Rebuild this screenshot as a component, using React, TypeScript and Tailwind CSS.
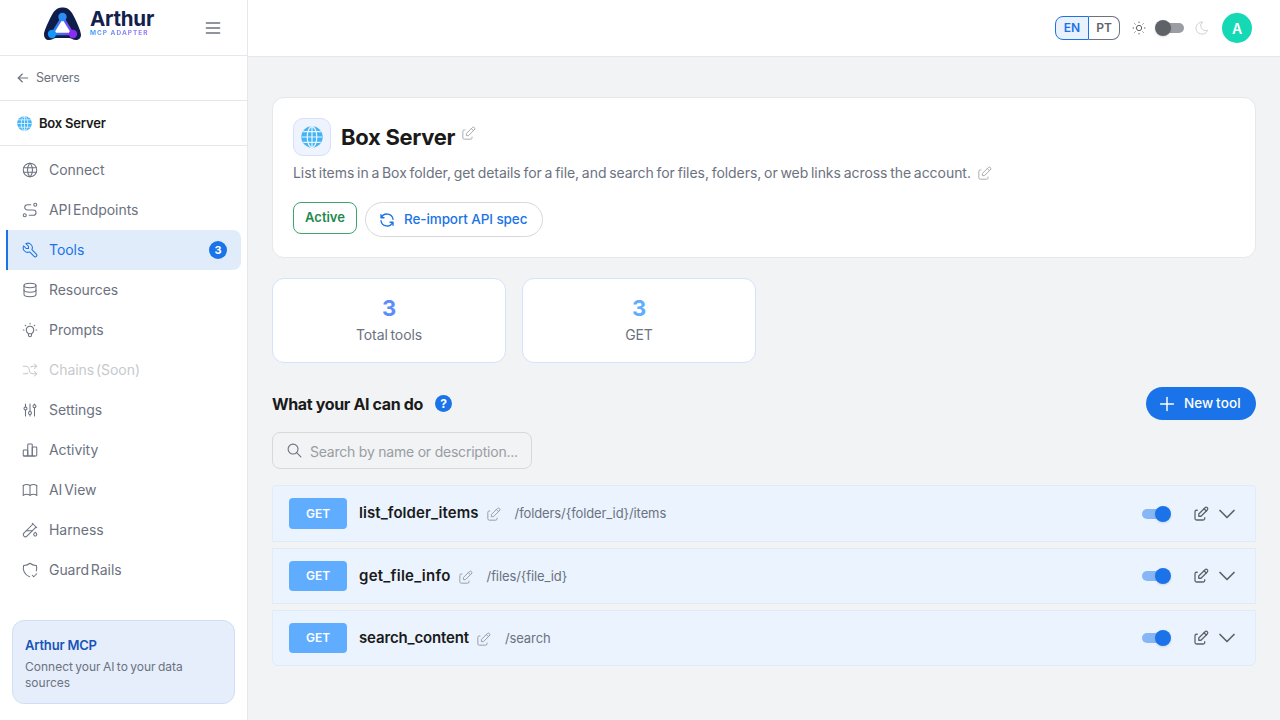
import React from "react";
import {
  TbWorld, TbRoute, TbTool, TbDatabase, TbBulb, TbArrowsShuffle, TbAdjustments, TbChartBar, TbBook,
  TbTestPipe, TbShieldCheck, TbEdit, TbRefresh, TbSearch, TbSun, TbMoon, TbPlus, TbChevronDown, TbMenu2, TbArrowLeft,
} from "react-icons/tb";

const font = { fontFamily: "Inter, 'Noto Sans', sans-serif" };

function Globe({ size }: { size: number }) {
  return (
    <svg width={size} height={size} viewBox="0 0 24 24" fill="none">
      <circle cx="12" cy="12" r="11.7" fill="#45b4f5" />
      <g stroke="#e8f6ff" strokeWidth="1.3" fill="none">
        <ellipse cx="12" cy="12" rx="5.2" ry="11.3" />
        <path d="M12 .5v23M.7 12h22.6M2.4 6.2h19.2M2.4 17.8h19.2" />
      </g>
    </svg>
  );
}

function Logo() {
  return (
    <svg width="40" height="34" viewBox="0 0 40 34" fill="none">
      <defs>
        <linearGradient id="tri" x1="0" y1="0" x2="1" y2="0">
          <stop offset="0" stopColor="#1d8cf8" />
          <stop offset="1" stopColor="#8b3df5" />
        </linearGradient>
      </defs>
      <path d="M1 27C1 24 6 13 10 6 13 1.5 16.5 .5 19.5 .5 23 .5 26 1.5 29 6 33 13 38 24 38 28 38 31 35.5 33 33 33 30 33 28 31 26 31H13C11 31 9 33 6 33 3 33 1 31 1 27Z" fill="#0f1d4a" />
      <path d="M19.5 10L9 27H30L19.5 10Z" stroke="url(#tri)" strokeWidth="2.4" fill="#ffffff" />
      <circle cx="19.5" cy="10" r="4.2" fill="#2a8ef5" />
      <circle cx="9" cy="27" r="4.2" fill="#1596f8" />
      <circle cx="30" cy="27" r="4.2" fill="#8a2df2" />
    </svg>
  );
}

const nav: { label: string; icon: any; active?: boolean; disabled?: boolean }[] = [
  { label: "Connect", icon: TbWorld },
  { label: "API Endpoints", icon: TbRoute },
  { label: "Tools", icon: TbTool, active: true },
  { label: "Resources", icon: TbDatabase },
  { label: "Prompts", icon: TbBulb },
  { label: "Chains (Soon)", icon: TbArrowsShuffle, disabled: true },
  { label: "Settings", icon: TbAdjustments },
  { label: "Activity", icon: TbChartBar },
  { label: "AI View", icon: TbBook },
  { label: "Harness", icon: TbTestPipe },
  { label: "Guard Rails", icon: TbShieldCheck },
];

function Sidebar() {
  return (
    <aside className="w-[248px] h-[720px] shrink-0 bg-white border-r border-[#e5e7eb] flex flex-col">
      <div className="h-[56px] shrink-0 border-b border-[#e5e7eb] flex items-center pl-[43px] pr-[24px]">
        <div className="-mt-[7px]">
          <Logo />
        </div>
        <div className="ml-[7px] flex flex-col items-start -mt-[9px]">
          <span className="text-[20.5px] leading-[20px] font-bold text-[#12204d] tracking-[-0.25px]">Arthur</span>
          <span className="text-[6.5px] leading-[8px] font-bold tracking-[1px] bg-gradient-to-r from-[#3b9cf7] to-[#9b6cf7] bg-clip-text text-transparent">MCP ADAPTER</span>
        </div>
        <TbMenu2 className="ml-auto text-[#6b7280]" size={20} strokeWidth={1.6} />
      </div>
      <div className="h-[45px] shrink-0 border-b border-[#e5e7eb] flex items-center pl-[15px] gap-[5px] text-[#6b7280]">
        <TbArrowLeft size={16} strokeWidth={1.7} />
        <span className="text-[12.5px] tracking-[-0.3px]">Servers</span>
      </div>
      <div className="h-[45px] shrink-0 border-b border-[#e5e7eb] flex items-center pl-[17px] gap-[7px]">
        <Globe size={15} />
        <span className="pt-[1px] text-[13px] font-semibold text-[#1a1a1a] tracking-[-0.2px]">Box Server</span>
      </div>
      <nav className="pt-[4px] flex flex-col">
        {nav.map((n) => {
          const Icon = n.icon;
          return (
            <div
              key={n.label}
              className={
                n.active
                  ? "h-[40px] ml-[6px] mr-[6px] pl-[13px] pr-[14px] flex items-center gap-[10px] rounded-r-[8px] bg-[#e1ecfb] border-l-2 border-[#1a73e8] text-[#1a73e8]"
                  : n.disabled
                  ? "h-[40px] ml-[6px] mr-[6px] pl-[15px] pr-[14px] flex items-center gap-[10px] text-[#c6c9ce]"
                  : "h-[40px] ml-[6px] mr-[6px] pl-[15px] pr-[14px] flex items-center gap-[10px] text-[#6b7280]"
              }
            >
              <Icon size={18} strokeWidth={1.4} className="shrink-0" />
              <span className="pb-[1px] text-[14px] tracking-[-0.05px] [word-spacing:-2px]">{n.label}</span>
              {n.active && (
                <span className="ml-auto w-[18px] h-[18px] rounded-full bg-[#1a73e8] text-white text-[11px] font-bold flex items-center justify-center">3</span>
              )}
            </div>
          );
        })}
      </nav>
      <div className="mt-auto mx-[12px] mb-[16px] h-[84px] rounded-[12px] bg-[#e6eefb] border border-[#cfdff8] px-[12px] pt-[15px]">
        <div className="text-[13px] leading-[18px] font-semibold text-[#1755b8] tracking-[-0.2px]">Arthur MCP</div>
        <div className="mt-[5px] text-[12px] leading-[16px] text-[#6b7280] tracking-[0px] [word-spacing:-1px]">Connect your AI to your data sources</div>
      </div>
    </aside>
  );
}

function Header() {
  return (
    <header className="h-[57px] shrink-0 bg-white border-b border-[#e5e7eb] flex items-center justify-end pr-[28px]">
      <div className="flex h-[24px] text-[12px] font-semibold">
        <span className="w-[34px] flex items-center justify-center rounded-l-[8px] border border-[#1a73e8] bg-[#e9f1fd] text-[#1a73e8]">EN</span>
        <span className="w-[31px] flex items-center justify-center rounded-r-[8px] border border-[#6b7280] border-l-0 text-[#5f6368]">PT</span>
      </div>
      <TbSun size={16} strokeWidth={1.5} className="ml-[11px] text-[#5f6368]" />
      <div className="relative ml-[10px] w-[27px] h-[10px] rounded-full bg-[#9a9da3]">
        <span className="absolute -left-[2px] -top-[3px] w-[16px] h-[16px] rounded-full bg-[#5f6368] shadow-sm" />
      </div>
      <TbMoon size={16} strokeWidth={1.5} className="ml-[10px] text-[#d0d2d6]" />
      <span className="ml-[12px] w-[30px] h-[30px] rounded-full bg-[#15d9b4] text-white text-[14px] font-semibold flex items-center justify-center">A</span>
    </header>
  );
}

function Row({ name, path, first, last, nameClass }: { name: string; path: string; first?: boolean; last?: boolean; nameClass: string }) {
  return (
    <div
      className={
        first
          ? "h-[57px] rounded-t-[4px] bg-[#eaf3fe] border border-[#e0ebfa] flex items-center pl-[16px] pr-[14px]"
          : last
          ? "h-[56px] rounded-b-[6px] bg-[#eaf3fe] border border-[#e0ebfa] flex items-center pl-[16px] pr-[14px]"
          : "h-[56px] bg-[#eaf3fe] border border-[#e0ebfa] flex items-center pl-[16px] pr-[14px]"
      }
    >
      <span className={first ? "w-[58px] h-[31px] rounded-[4px] bg-[#60adff] text-white text-[12px] font-semibold flex items-center justify-center" : "w-[58px] h-[30px] rounded-[4px] bg-[#60adff] text-white text-[12px] font-semibold flex items-center justify-center"}>GET</span>
      <span className={nameClass}>{name}</span>
      <TbEdit size={17} strokeWidth={1.4} className="ml-[6px] mt-[2px] text-[#9a9da3]" />
      <span className="ml-[13px] pt-[1px] text-[13px] text-[#6b7280] tracking-[-0.1px]">{path}</span>
      <div className="ml-auto relative w-[28px] h-[10px] rounded-full bg-[#86b6f5]">
        <span className="absolute -right-[1px] -top-[3px] w-[16px] h-[16px] rounded-full bg-[#1a73e8] shadow-sm" />
      </div>
      <TbEdit size={18} strokeWidth={1.7} className="ml-[22px] text-[#5f6368]" />
      <TbChevronDown size={28} strokeWidth={1.5} className="ml-[3px] text-[#5f6368]" />
    </div>
  );
}

export default function App() {
  return (
    <div className="flex w-[1280px] h-[720px] overflow-hidden bg-[#f1f3f5]" style={font}>
      <Sidebar />
      <div className="flex-1 flex flex-col min-w-0">
        <Header />
        <main className="flex-1 px-[24px] pt-[40px]">
          <section className="h-[161px] rounded-[12px] bg-white border border-[#e5e7eb] pl-[20px] pt-[20px]">
            <div className="flex items-center">
              <span className="w-[38px] h-[38px] rounded-[10px] bg-[#eef3fe] border border-[#d4e1fa] flex items-center justify-center">
                <Globe size={22} />
              </span>
              <h1 className="ml-[10px] text-[22px] leading-[30px] font-bold text-[#1a1a1a] tracking-[-0.3px]">Box Server</h1>
              <TbEdit size={17} strokeWidth={1.4} className="ml-[5px] -mt-[8px] text-[#a9abaf]" />
            </div>
            <div className="mt-[5px] flex items-center h-[22px]">
              <p className="text-[14px] text-[#6b7280] tracking-[-0.05px] [word-spacing:-1.1px]">List items in a Box folder, get details for a file, and search for files, folders, or web links across the account.</p>
              <TbEdit size={17} strokeWidth={1.4} className="ml-[5px] mt-[2px] text-[#a9abaf]" />
            </div>
            <div className="mt-[19px] flex items-start gap-[8px]">
              <span className="h-[32px] w-[64px] rounded-[8px] border border-[#3ea56a] text-[#1f8a4c] text-[13px] font-semibold flex items-center justify-center">Active</span>
              <span className="h-[35px] w-[178px] rounded-full border border-[#d6d8dc] text-[#1a73e8] text-[13.5px] font-medium flex items-center pl-[12px] gap-[8px] tracking-[-0.1px]">
                <TbRefresh size={18} strokeWidth={1.8} />
                Re-import API spec
              </span>
            </div>
          </section>
          <div className="mt-[20px] flex gap-[16px]">
            <div className="w-[234px] h-[85px] rounded-[12px] bg-white border border-[#d3e3fb] flex flex-col items-center pt-[14px]">
              <span className="text-[22px] leading-[30px] font-bold text-[#5c8dfb]">3</span>
              <span className="mt-[2px] text-[14px] leading-[20px] text-[#6b7280] tracking-[-0.1px] [word-spacing:-1px]">Total tools</span>
            </div>
            <div className="w-[234px] h-[85px] rounded-[12px] bg-white border border-[#d3e3fb] flex flex-col items-center pt-[14px]">
              <span className="text-[22px] leading-[30px] font-bold text-[#60adff]">3</span>
              <span className="mt-[2px] text-[14px] leading-[20px] text-[#6b7280] tracking-[-0.1px]">GET</span>
            </div>
          </div>
          <div className="mt-[24px] h-[33px] flex items-center">
            <h2 className="pt-[1px] text-[16px] font-bold text-[#1a1a1a] tracking-[-0.35px]">What your AI can do</h2>
            <span className="ml-[12px] w-[17px] h-[17px] rounded-full bg-[#1a73e8] text-white text-[12px] font-bold flex items-center justify-center">?</span>
            <span className="ml-auto h-[33px] w-[110px] rounded-full bg-[#1a73e8] text-white text-[13.5px] font-medium flex items-center pl-[10px] gap-[6px] tracking-[0.1px] [word-spacing:-1px]">
              <TbPlus size={22} strokeWidth={1.6} />
              New tool
            </span>
          </div>
          <div className="mt-[12px] w-[260px] h-[37px] rounded-[8px] border border-[#d6d8dc] flex items-center pl-[13px] gap-[7px]">
            <TbSearch size={17} strokeWidth={1.6} className="text-[#6b7280] shrink-0" />
            <span className="pt-[1px] text-[14px] text-[#9a9da3] tracking-[-0.22px] whitespace-nowrap">Search by name or description...</span>
          </div>
          <div className="mt-[16px] flex flex-col gap-[6px]">
            <Row first name="list_folder_items" path="/folders/{folder_id}/items" nameClass="ml-[12px] text-[15px] font-semibold text-[#1a1a1a] tracking-[0.08px]" />
            <Row name="get_file_info" path="/files/{file_id}" nameClass="ml-[12px] text-[15px] font-semibold text-[#1a1a1a] tracking-[0.25px]" />
            <Row last name="search_content" path="/search" nameClass="ml-[12px] text-[15px] font-semibold text-[#1a1a1a] tracking-[-0.15px]" />
          </div>
        </main>
      </div>
    </div>
  );
}
